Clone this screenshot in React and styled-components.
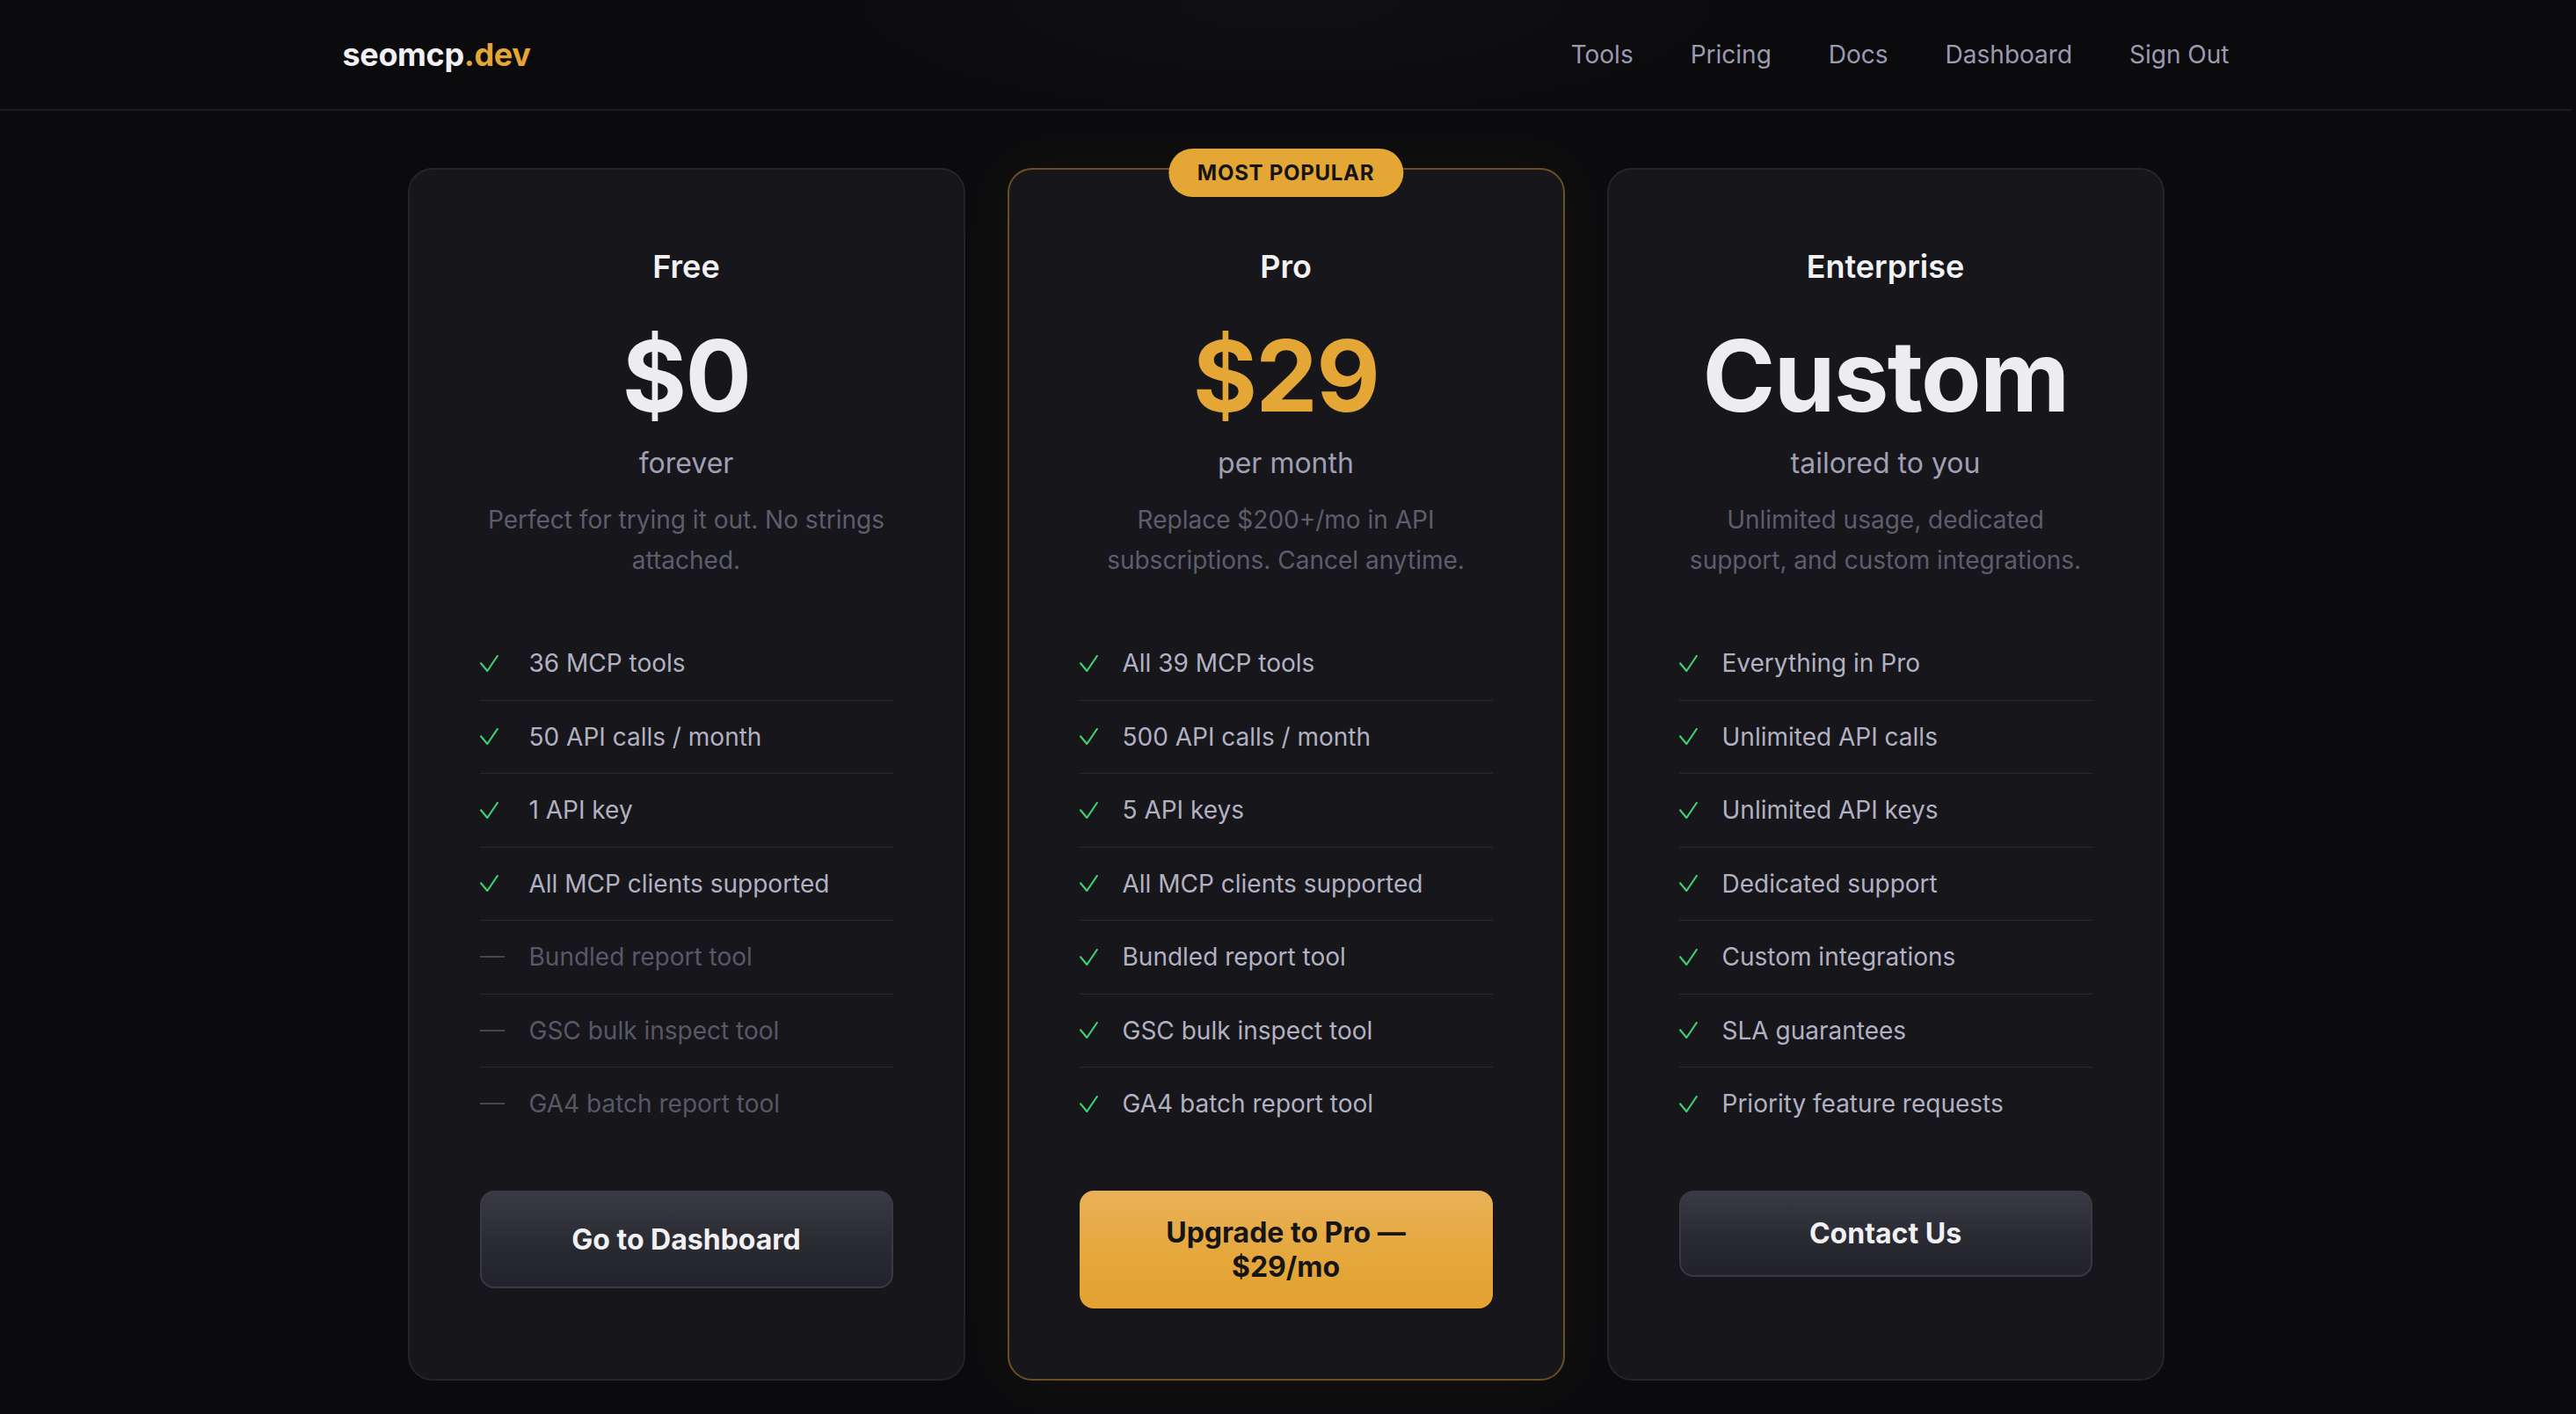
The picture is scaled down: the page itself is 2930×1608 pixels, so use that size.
import React from "react";
import styled, { createGlobalStyle, css } from "styled-components";

const GlobalStyle = createGlobalStyle`
    * {
        box-sizing: border-box;
    }
    html, body {
        margin: 0;
        padding: 0;
    }
    body {
        background: #0b0b0e;
        color: #f1f1f4;
        font-family: Inter, "Noto Sans", "Liberation Sans", sans-serif;
        -webkit-font-smoothing: antialiased;
    }
`;

const Page = styled.div`
    min-height: 100vh;
    padding-right: 5px;
    background:
        radial-gradient(ellipse 560px 150px at 50% 0%, rgba(255, 255, 255, 0.022), transparent 100%),
        #0b0b0e;
`;

const Header = styled.header`
    height: 126px;
    border-bottom: 2px solid #1b1b21;
`;

const HeaderInner = styled.div`
    max-width: 2146px;
    height: 100%;
    margin: 0 auto;
    display: flex;
    align-items: center;
    justify-content: space-between;
`;

const Logo = styled.a`
    font-size: 36px;
    font-weight: 700;
    letter-spacing: -0.01em;
    color: #f0f0f4;
    text-decoration: none;

    span {
        color: #e4a634;
    }
`;

const Nav = styled.nav`
    display: flex;
    align-items: center;
    gap: 65px;
`;

const NavLink = styled.a`
    font-size: 28px;
    color: #9b9aae;
    text-decoration: none;
`;

const Main = styled.main`
    padding: 65px 0 40px;
`;

const Plans = styled.div`
    display: grid;
    grid-template-columns: repeat(3, 634px);
    gap: 48px;
    justify-content: center;
`;

const Card = styled.div`
    position: relative;
    display: flex;
    flex-direction: column;
    background: #16161b;
    border: 2px solid #24242b;
    border-radius: 28px;
    padding: 88px 80px 80px;

    ${props => props.$featured && css`
        border-color: #6a4f24;
        box-shadow: 0 0 70px 12px rgba(228, 166, 52, 0.045);
    `}
`;

const Badge = styled.span`
    position: absolute;
    top: -24px;
    left: 50%;
    transform: translateX(-50%);
    height: 55px;
    padding: 0 33px;
    display: flex;
    align-items: center;
    border-radius: 999px;
    background: #e4a634;
    color: #141414;
    font-size: 24px;
    font-weight: 700;
    letter-spacing: 0.03em;
    white-space: nowrap;
`;

const PlanName = styled.h3`
    margin: 0;
    text-align: center;
    font-size: 36px;
    line-height: 44px;
    font-weight: 600;
    color: #f2f2f5;
`;

const Price = styled.div`
    margin-top: 46px;
    text-align: center;
    font-size: 112px;
    line-height: 112px;
    font-weight: 700;
    letter-spacing: -0.015em;
    color: ${props => (props.$accent ? "#e4a634" : "#ededf1")};
`;

const Period = styled.div`
    margin-top: 24px;
    text-align: center;
    font-size: 32px;
    line-height: 40px;
    color: #a09fb3;
`;

const Description = styled.p`
    margin: 21px 0 0;
    text-align: center;
    font-size: 28px;
    line-height: 46px;
    color: #5e5d6c;
`;

const Features = styled.ul`
    list-style: none;
    margin: 53px 0 0;
    padding: 0;
`;

const Feature = styled.li`
    display: flex;
    align-items: center;
    gap: 28px;
    padding: 24px 0;
    font-size: 28px;
    line-height: 34.5px;
    color: ${props => (props.$off ? "#585866" : "#b2b1c2")};

    & + & {
        border-top: 1px solid #28282f;
    }
`;

const IconBox = styled.span`
    flex: 0 0 ${props => props.$width}px;
    display: flex;
    align-items: center;
`;

const Dash = styled.span`
    width: 28px;
    height: 2px;
    background: #464652;
`;

const ActionButton = styled.button`
    margin-top: 57px;
    width: 100%;
    min-height: ${props => props.$height}px;
    padding: 0 48px;
    border-radius: 16px;
    font-family: inherit;
    font-size: 32px;
    line-height: 39px;
    font-weight: 700;
    display: flex;
    align-items: center;
    justify-content: center;
    text-align: center;
    cursor: pointer;
    border: 2px solid #393943;
    background: linear-gradient(180deg, #3a3a44 0%, #2a2a33 55%, #22222a 100%);
    color: #f1f1f4;

    ${props => props.$primary && css`
        border: none;
        background: linear-gradient(180deg, #e9b158 0%, #e5a73b 60%, #e3a230 100%);
        color: #151515;
    `}
`;

const Check = () => (
    <svg width="21" height="19" viewBox="0 0 21 19" fill="none">
        <path d="M1 9.3 L8.3 18 L19.8 1" stroke="#3ecf71" strokeWidth="2.2" strokeLinecap="round" strokeLinejoin="round" />
    </svg>
);

const plans = [
    {
        name: "Free",
        price: "$0",
        period: "forever",
        description: "Perfect for trying it out. No strings attached.",
        features: [
            ["36 MCP tools", true],
            ["50 API calls / month", true],
            ["1 API key", true],
            ["All MCP clients supported", true],
            ["Bundled report tool", false],
            ["GSC bulk inspect tool", false],
            ["GA4 batch report tool", false]
        ],
        cta: "Go to Dashboard",
        ctaHeight: 111
    },
    {
        name: "Pro",
        price: "$29",
        period: "per month",
        description: "Replace $200+/mo in API subscriptions. Cancel anytime.",
        features: [
            ["All 39 MCP tools", true],
            ["500 API calls / month", true],
            ["5 API keys", true],
            ["All MCP clients supported", true],
            ["Bundled report tool", true],
            ["GSC bulk inspect tool", true],
            ["GA4 batch report tool", true]
        ],
        cta: "Upgrade to Pro — $29/mo",
        ctaHeight: 134,
        featured: true
    },
    {
        name: "Enterprise",
        price: "Custom",
        period: "tailored to you",
        description: "Unlimited usage, dedicated support, and custom integrations.",
        features: [
            ["Everything in Pro", true],
            ["Unlimited API calls", true],
            ["Unlimited API keys", true],
            ["Dedicated support", true],
            ["Custom integrations", true],
            ["SLA guarantees", true],
            ["Priority feature requests", true]
        ],
        cta: "Contact Us",
        ctaHeight: 98
    }
];

const PlanCard = ({ plan }) => {
    const iconWidth = plan.features.some(([, on]) => !on) ? 28 : 21;
    return (
        <Card $featured={plan.featured}>
            {plan.featured && <Badge>MOST POPULAR</Badge>}
            <PlanName>{plan.name}</PlanName>
            <Price $accent={plan.featured}>{plan.price}</Price>
            <Period>{plan.period}</Period>
            <Description>{plan.description}</Description>
            <Features>
                {plan.features.map(([label, on]) => (
                    <Feature key={label} $off={!on}>
                        <IconBox $width={iconWidth}>{on ? <Check /> : <Dash />}</IconBox>
                        {label}
                    </Feature>
                ))}
            </Features>
            <ActionButton $primary={plan.featured} $height={plan.ctaHeight}>
                {plan.cta}
            </ActionButton>
        </Card>
    );
};

const App = () => (
    <>
        <GlobalStyle />
        <Page>
            <Header>
                <HeaderInner>
                    <Logo href="#">seomcp<span>.dev</span></Logo>
                    <Nav>
                        <NavLink href="#">Tools</NavLink>
                        <NavLink href="#">Pricing</NavLink>
                        <NavLink href="#">Docs</NavLink>
                        <NavLink href="#">Dashboard</NavLink>
                        <NavLink href="#">Sign Out</NavLink>
                    </Nav>
                </HeaderInner>
            </Header>
            <Main>
                <Plans>
                    {plans.map(plan => (
                        <PlanCard key={plan.name} plan={plan} />
                    ))}
                </Plans>
            </Main>
        </Page>
    </>
);

export default App;
